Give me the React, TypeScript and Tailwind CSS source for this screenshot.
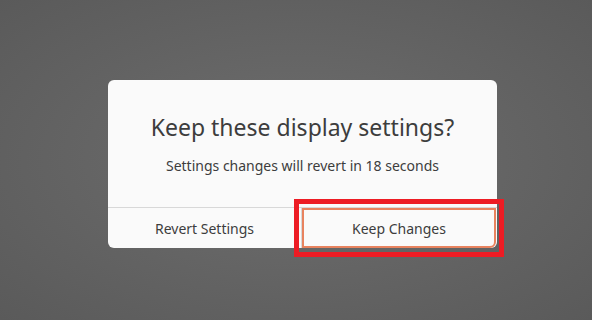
export default function App() {
  return (
    <div
      className="h-[320px] w-[592px] overflow-hidden bg-[radial-gradient(ellipse_at_center,#6e6e6e_0%,#636363_55%,#5a5a5a_100%)] pl-[108px] pt-[80px]"
      style={{ fontFamily: '"Noto Sans", "Open Sans", sans-serif' }}
    >
      <div className="flex w-[389px] flex-col rounded-[6px] bg-[#fafafa] text-[#3d3d3d]">
        <div className="flex h-[127px] flex-col items-center pt-[32px]">
          <h1 className="text-[23px] leading-[30px]">Keep these display settings?</h1>
          <p className="mt-[14px] text-[14px] leading-[20px]">Settings changes will revert in 18 seconds</p>
        </div>
        <div className="flex h-[41px] border-t border-[#d8d8d8]">
          <button type="button" className="h-[40px] w-[194px] rounded-bl-[6px] border-r border-[#d8d8d8] text-[14px]">
            Revert Settings
          </button>
          <button
            type="button"
            className="relative h-[40px] w-[194px] rounded-br-[6px] border-2 border-[#e8835f] text-[14px]"
          >
            Keep Changes
            <span className="pointer-events-none absolute -bottom-[11px] -left-[10px] -right-[10px] -top-[11px] border-[5px] border-[#ed1c24]" />
          </button>
        </div>
      </div>
    </div>
  );
}
